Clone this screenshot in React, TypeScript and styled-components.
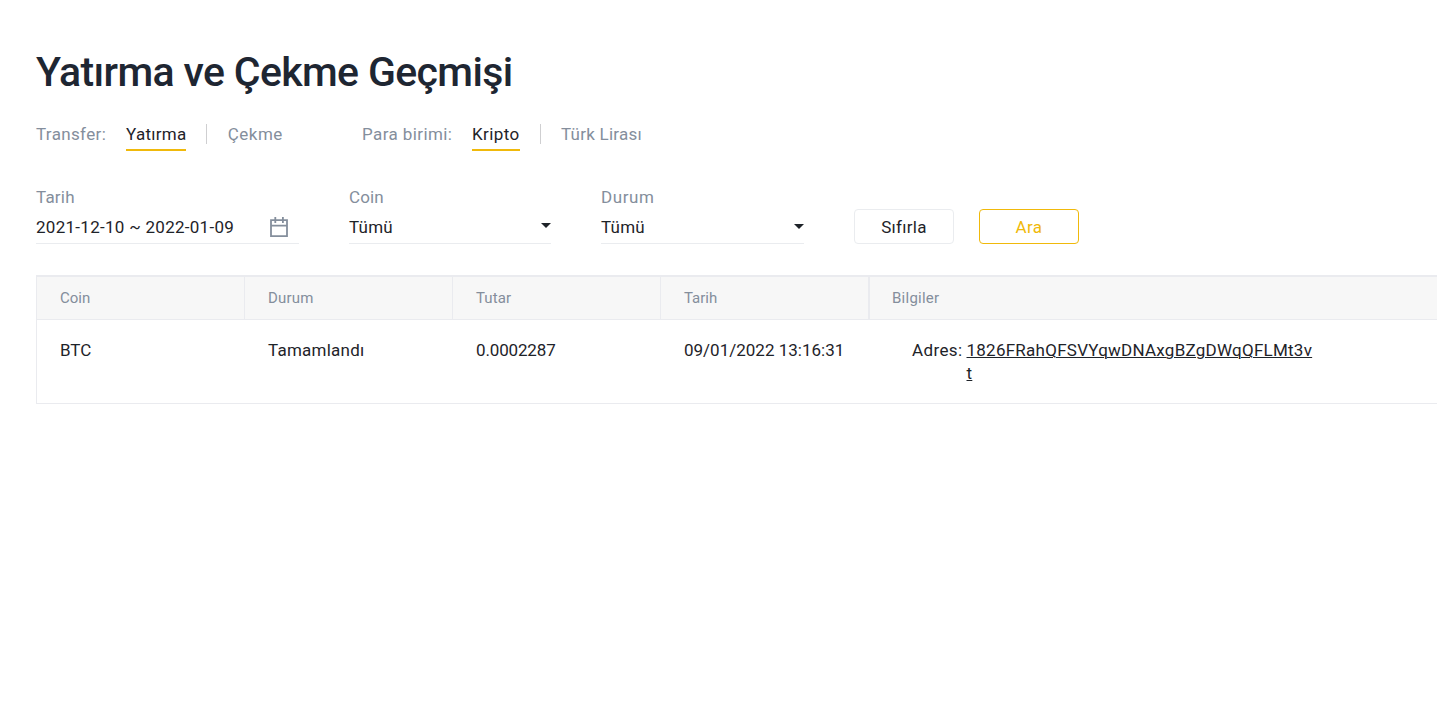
import React from 'react';
import styled, { createGlobalStyle } from 'styled-components';

const GlobalStyle = createGlobalStyle`
  * { box-sizing: border-box; }
  body { margin: 0; background: #fff; overflow: hidden; color: #1e2329; font-family: Roboto, 'Liberation Sans', sans-serif; font-size: 17px; line-height: 24px; }
`;

const Page = styled.main`
  width: 1437px;
  height: 714px;
  padding: 44px 0 0 36px;
  overflow: hidden;
`;

const Text = styled.span<{ $track?: number }>`
  white-space: nowrap;
  letter-spacing: ${({ $track = 0 }) => $track}px;
`;

const Title = styled.h1`
  margin: 0;
  height: 56px;
  color: #1e2632;
  font-size: 41px;
  font-weight: 500;
  line-height: 57px;
  letter-spacing: -0.64px;
`;

const FilterTabs = styled.nav`
  display: flex;
  gap: 79px;
  height: 51px;
  padding-top: 21px;
  line-height: 26px;
`;

const TabGroup = styled.div`
  display: flex;
  gap: 20px;
`;

const TabLabel = styled.div<{ $w: number }>`
  width: ${({ $w }) => $w}px;
  color: #848e9c;
`;

const Tab = styled.div<{ $w: number; $active?: boolean; $indent?: number }>`
  width: ${({ $w }) => $w}px;
  height: 30px;
  padding-left: ${({ $indent = 0 }) => $indent}px;
  color: ${({ $active }) => ($active ? '#1e2329' : '#848e9c')};
  border-bottom: 2px solid ${({ $active }) => ($active ? '#f0b90b' : 'transparent')};
`;

const Separator = styled.div`
  width: 1px;
  height: 20px;
  margin-top: 3px;
  background: #cfcfd1;
`;

const Search = styled.form`
  display: flex;
  align-items: flex-end;
  height: 93px;
`;

const Field = styled.div<{ $w: number; $gap: number }>`
  width: ${({ $w }) => $w}px;
  margin-right: ${({ $gap }) => $gap}px;
`;

const FieldLabel = styled.div`
  height: 28px;
  line-height: 24px;
  color: #848e9c;
`;

const Control = styled.div<{ $right?: number }>`
  display: flex;
  align-items: center;
  justify-content: space-between;
  height: 31px;
  padding: 0 ${({ $right = 0 }) => $right}px 2px 0;
  border-bottom: 1px solid #eaecef;
`;

const Button = styled.button<{ $primary?: boolean }>`
  width: 100px;
  height: 35px;
  margin-right: 25px;
  padding: 0;
  border: 1px solid ${({ $primary }) => ($primary ? '#f0b90b' : '#eaecef')};
  border-radius: 4px;
  background: #fff;
  color: ${({ $primary }) => ($primary ? '#f0b90b' : '#1e2329')};
  font: inherit;
`;

const Table = styled.section`
  width: 1420px;
  height: 129px;
  margin-top: 31px;
  border: 1px solid #eaebef;
  border-top-width: 2px;
`;

const HeadRow = styled.div`
  display: grid;
  grid-template-columns: 208px 208px 208px 209px 1fr;
  height: 43px;
  border-bottom: 1px solid #eaebef;
  background: #f7f7f7;
  color: #848e9c;
  font-size: 15px;
  line-height: 42px;
`;

const HeadCell = styled.div<{ $rule?: number; $pad?: number }>`
  padding-left: ${({ $pad = 23 }) => $pad}px;
  border-right: ${({ $rule = 1 }) => $rule}px solid #eaebef;
`;

const Row = styled.div`
  display: grid;
  grid-template-columns: 208px 208px 208px 208px 1fr;
  padding-top: 19px;
  line-height: 23px;
`;

const Cell = styled.div`
  padding-left: 23px;
`;

const Info = styled.div`
  display: flex;
  padding-left: 43px;
`;

const AddressLabel = styled.div`
  width: 54.5px;
  letter-spacing: 0.38px;
`;

const Address = styled.a`
  width: 349px;
  letter-spacing: 0.25px;
  word-break: break-all;
  text-decoration: underline;
  text-decoration-thickness: 1px;
  text-underline-offset: 1px;
`;

const CalendarIcon = () => (
  <svg width="18" height="20" viewBox="0 0 18 20" fill="none" stroke="#848e9c" strokeWidth="1.8">
    <path d="M1 3.2h16v15.9H1zM1 8.6h16M5.3 0v6M12.9 0v6" />
  </svg>
);

const CaretShape = styled.svg<{ $lift: number }>`
  margin-bottom: ${({ $lift }) => $lift}px;
`;

const Caret = ({ lift }: { lift: number }) => (
  <CaretShape $lift={lift} width="10" height="5" viewBox="0 0 10 5" fill="#1e2329">
    <path d="M0 0h10L5 5z" />
  </CaretShape>
);

export default function App() {
  return (
    <>
      <GlobalStyle />
      <Page>
        <Title>Yatırma ve Çekme Geçmişi</Title>
        <FilterTabs>
          <TabGroup>
            <TabLabel $w={70}><Text $track={0.35}>Transfer:</Text></TabLabel>
            <Tab $w={60} $active><Text $track={0.28}>Yatırma</Text></Tab>
            <Separator />
            <Tab $w={56} $indent={0.7}><Text $track={0.5}>Çekme</Text></Tab>
          </TabGroup>
          <TabGroup>
            <TabLabel $w={90}><Text $track={0.4}>Para birimi:</Text></TabLabel>
            <Tab $w={48} $active><Text $track={0.42}>Kripto</Text></Tab>
            <Separator />
            <Tab $w={81}><Text $track={0.24}>Türk Lirası</Text></Tab>
          </TabGroup>
        </FilterTabs>
        <Search>
          <Field $w={263} $gap={50}>
            <FieldLabel><Text $track={0.2}>Tarih</Text></FieldLabel>
            <Control $right={11}><Text $track={0.28}>2021-12-10 ~ 2022-01-09</Text><CalendarIcon /></Control>
          </Field>
          <Field $w={202} $gap={50}>
            <FieldLabel><Text $track={0.1}>Coin</Text></FieldLabel>
            <Control><Text $track={0.2}>Tümü</Text><Caret lift={3} /></Control>
          </Field>
          <Field $w={203} $gap={50}>
            <FieldLabel><Text $track={0.6}>Durum</Text></FieldLabel>
            <Control><Text $track={0.2}>Tümü</Text><Caret lift={1} /></Control>
          </Field>
          <Button type="button"><Text $track={0.3}>Sıfırla</Text></Button>
          <Button type="button" $primary><Text $track={0.4}>Ara</Text></Button>
        </Search>
        <Table>
          <HeadRow>
            <HeadCell>Coin</HeadCell>
            <HeadCell><Text $track={0.2}>Durum</Text></HeadCell>
            <HeadCell><Text $track={0.1}>Tutar</Text></HeadCell>
            <HeadCell $rule={2}>Tarih</HeadCell>
            <HeadCell $pad={22}><Text $track={0.25}>Bilgiler</Text></HeadCell>
          </HeadRow>
          <Row>
            <Cell>BTC</Cell>
            <Cell><Text $track={0.24}>Tamamlandı</Text></Cell>
            <Cell><Text $track={-0.15}>0.0002287</Text></Cell>
            <Cell>09/01/2022 13:16:31</Cell>
            <Info>
              <AddressLabel>Adres:</AddressLabel>
              <Address>1826FRahQFSVYqwDNAxgBZgDWqQFLMt3vt</Address>
            </Info>
          </Row>
        </Table>
      </Page>
    </>
  );
}
